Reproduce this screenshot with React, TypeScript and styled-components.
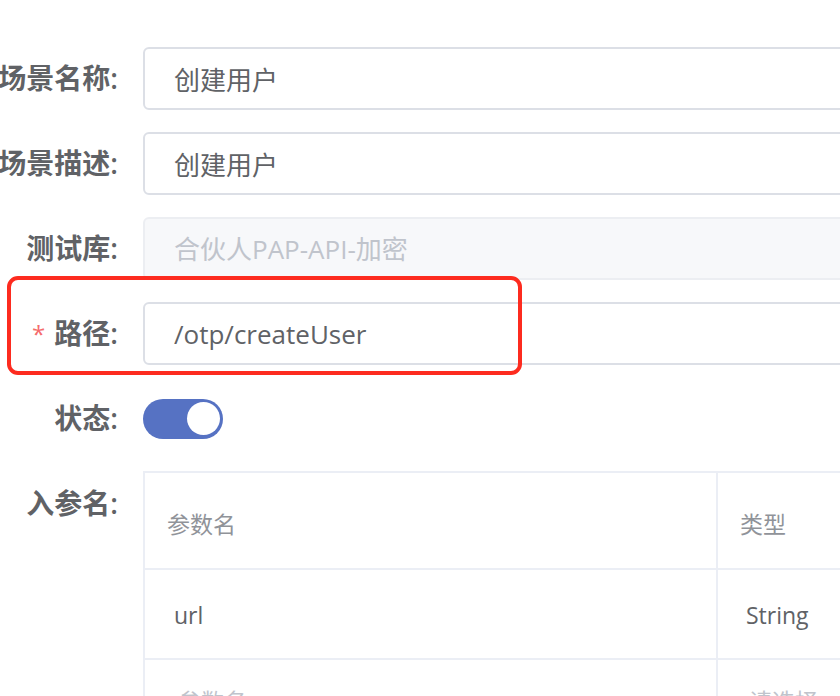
import React from 'react'
import styled, { createGlobalStyle } from 'styled-components'

const GlobalStyle = createGlobalStyle`
	html, body {
		margin: 0;
		padding: 0;
		background: #fff;
		overflow: hidden;
	}
	body {
		font-family: "Open Sans", "Noto Sans CJK SC", sans-serif;
	}
`

const Form = styled.form`
	width: 1100px;
	padding-top: 47px;
`

const FormItem = styled.div`
	display: flex;
	align-items: flex-start;
	margin-bottom: 22px;
	position: relative;
`

const Label = styled.label`
	flex: 0 0 143px;
	min-width: 0;
	box-sizing: border-box;
	display: flex;
	justify-content: flex-end;
	padding-right: 25px;
	font-size: 28px;
	font-weight: 600;
	line-height: 63px;
	color: #606266;
	white-space: nowrap;
`

const Required = styled.span`
	color: #f56c6c;
	font-size: 24px;
	font-weight: 500;
	margin-right: 9px;
`

const Content = styled.div<{ center?: boolean }>`
	flex: 1;
	min-height: 63px;
	display: flex;
	align-items: ${p => p.center ? 'center' : 'stretch'};
`

const Input = styled.input`
	box-sizing: border-box;
	width: 100%;
	height: 63px;
	padding: 0 29px;
	border: 2px solid #dcdfe6;
	border-radius: 6px;
	background: #fff;
	font-family: "Open Sans", "Noto Sans CJK SC", sans-serif;
	font-size: 26px;
	color: #606266;
	outline: none;

	&::placeholder {
		color: #c0c4cc;
	}

	&:disabled {
		background: #f7f8fa;
		border-color: #eceef2;
	}
`

const Switch = styled.span<{ on: boolean }>`
	display: inline-block;
	position: relative;
	width: 80px;
	height: 40px;
	border-radius: 20px;
	background: ${p => p.on ? '#5672c3' : '#dcdfe6'};

	&::after {
		content: '';
		position: absolute;
		top: 3.5px;
		width: 33px;
		height: 33px;
		border-radius: 50%;
		background: #fff;
		left: ${p => p.on ? 'auto' : '3.5px'};
		right: ${p => p.on ? '3.5px' : 'auto'};
	}
`

// red annotation drawn over the screenshot
const Highlight = styled.div`
	position: absolute;
	top: -26px;
	left: 7px;
	width: 515px;
	height: 99px;
	box-sizing: border-box;
	border: 4.5px solid #fd2b1f;
	border-radius: 11px;
	pointer-events: none;
`

const Table = styled.table`
	border-collapse: collapse;
	width: 900px;
	table-layout: fixed;
	border: 2px solid #ebeef5;
	margin-top: -1px;
`

const Cell = styled.td<{ head?: boolean, muted?: boolean, first?: boolean }>`
	border: 2px solid #ebeef5;
	font-size: 23px;
	padding-left: ${p => p.head ? 22 : p.muted ? (p.first ? 33 : 31) : p.first ? 29 : 28}px;
	color: ${p => p.head ? '#909399' : p.muted ? '#c0c4cc' : '#606266'};
	height: ${p => p.head ? 97 : 90}px;
	padding-top: ${p => p.head ? 10 : p.muted ? 27 : 4}px;
	vertical-align: ${p => p.muted ? 'top' : 'middle'};
	box-sizing: border-box;
	line-height: 1.3;
`

export default function App() {
	return <>
		<GlobalStyle/>
		<Form>
			<FormItem>
				<Label>场景名称:</Label>
				<Content><Input readOnly value={'创建用户'}/></Content>
			</FormItem>
			<FormItem>
				<Label>场景描述:</Label>
				<Content><Input readOnly value={'创建用户'}/></Content>
			</FormItem>
			<FormItem>
				<Label>测试库:</Label>
				<Content><Input disabled placeholder={'合伙人PAP-API-加密'}/></Content>
			</FormItem>
			<FormItem>
				<Highlight/>
				<Label><Required>*</Required>路径:</Label>
				<Content><Input readOnly value={'/otp/createUser'}/></Content>
			</FormItem>
			<FormItem>
				<Label>状态:</Label>
				<Content center><Switch on={true}/></Content>
			</FormItem>
			<FormItem>
				<Label>入参名:</Label>
				<Content>
					<Table>
						<colgroup>
							<col style={{ width: 573 }}/>
							<col/>
						</colgroup>
						<tbody>
							<tr>
								<Cell head first>参数名</Cell>
								<Cell head>类型</Cell>
							</tr>
							<tr>
								<Cell first>url</Cell>
								<Cell>String</Cell>
							</tr>
							<tr>
								<Cell muted first>参数名</Cell>
								<Cell muted>请选择</Cell>
							</tr>
						</tbody>
					</Table>
				</Content>
			</FormItem>
		</Form>
	</>
}
